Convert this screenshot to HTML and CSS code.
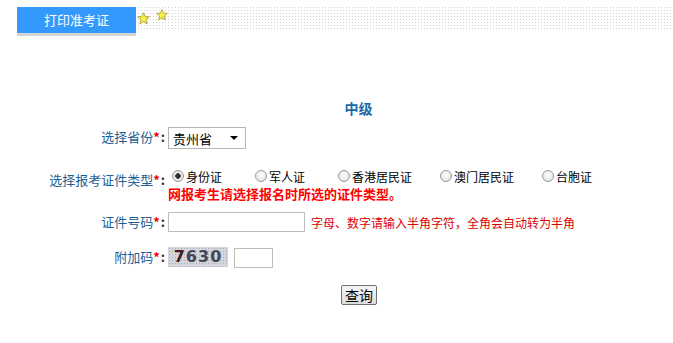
FILE: index.html
```html
<!DOCTYPE html>
<html lang="zh-CN">
<head>
    <meta charset="UTF-8">
    <title>打印准考证</title>
    <link rel="stylesheet" href="styles.css">
</head>
<body>
    <div class="header">
        <div class="tab">打印准考证</div>
        <div class="stars">
            <svg class="star star-low" viewBox="0 0 20 20" width="13" height="13">
                <polygon points="10,1 12.6,7 19,7.4 14,11.6 15.6,18.4 10,14.8 4.4,18.4 6,11.6 1,7.4 7.4,7" fill="#f7ee4a" stroke="#a9a23a" stroke-width="1.4" stroke-linejoin="round"/>
            </svg>
            <svg class="star star-high" viewBox="0 0 20 20" width="12" height="12">
                <polygon points="10,1 12.6,7 19,7.4 14,11.6 15.6,18.4 10,14.8 4.4,18.4 6,11.6 1,7.4 7.4,7" fill="#f7ee4a" stroke="#a9a23a" stroke-width="1.4" stroke-linejoin="round"/>
            </svg>
        </div>
        <div class="dots"></div>
    </div>

    <h2 class="level">中级</h2>

    <form class="query-form">
        <div class="row row-province">
            <label class="label">选择省份<span class="req">*</span><b>:</b></label>
            <div class="field">
                <div class="select-wrap">
                    <select class="select">
                        <option>贵州省</option>
                    </select>
                </div>
            </div>
        </div>

        <div class="row row-type">
            <label class="label">选择报考证件类型<span class="req">*</span><b>:</b></label>
            <div class="field">
                <div class="radios">
                    <label class="opt"><input type="radio" name="idtype" checked>身份证</label>
                    <label class="opt"><input type="radio" name="idtype">军人证</label>
                    <label class="opt opt-long"><input type="radio" name="idtype">香港居民证</label>
                    <label class="opt opt-long"><input type="radio" name="idtype">澳门居民证</label>
                    <label class="opt"><input type="radio" name="idtype">台胞证</label>
                </div>
                <div class="warn">网报考生请选择报名时所选的证件类型。</div>
            </div>
        </div>

        <div class="row row-id">
            <label class="label">证件号码<span class="req">*</span><b>:</b></label>
            <div class="field inline">
                <input type="text" class="text-id">
                <span class="hint">字母、数字请输入半角字符，全角会自动转为半角</span>
            </div>
        </div>

        <div class="row row-code">
            <label class="label">附加码<span class="req">*</span><b>:</b></label>
            <div class="field inline">
                <span class="captcha"><span class="c1">7</span>630</span>
                <input type="text" class="text-code">
            </div>
        </div>

        <div class="submit-row">
            <button type="button" class="btn">查询</button>
        </div>
    </form>
</body>
</html>
```

FILE: styles.css
```css
body {
    margin: 0;
    font-family: "Noto Sans CJK SC", "Liberation Sans", sans-serif;
    font-size: 12px;
    background: #fff;
    color: #000;
}
.header {
    display: flex;
    align-items: flex-start;
    margin: 5px 0 0 17px;
    height: 31px;
}
.tab {
    width: 119px;
    height: 26px;
    margin-top: 2px;
    line-height: 25px;
    background: #3399fd;
    color: #fff;
    font-size: 13px;
    text-align: center;
    border-bottom: 3px solid #d4d4d4;
}
.stars {
    display: flex;
    align-items: flex-start;
    width: 34px;
    height: 25px;
    background-image: linear-gradient(90deg, #fff 2px, transparent 2px), linear-gradient(#fff 2px, #d2d2d2 2px);
    background-size: 3px 3px;
}
.star {
    display: block;
}
.star-low {
    margin: 7px 0 0 1px;
}
.star-high {
    margin: 4px 0 0 6px;
}
.dots {
    flex: 1;
    height: 25px;
    background-image: linear-gradient(90deg, #fff 2px, transparent 2px), linear-gradient(#fff 2px, #d2d2d2 2px);
    background-size: 3px 3px;
}
.level {
    margin: 62px 0 0 0;
    height: 20px;
    line-height: 20px;
    text-align: center;
    font-size: 14px;
    font-weight: bold;
    color: #1a6aa8;
    padding-left: 44px;
}
.query-form {
    margin: 0;
}
.row {
    display: grid;
    grid-template-columns: 165px 1fr;
    column-gap: 3px;
}
.label {
    text-align: right;
    color: #1e5f94;
    font-size: 13px;
    line-height: 20px;
}
.label b {
    color: #333;
    padding-left: 1px;
}
.req {
    color: #e00;
    font-weight: bold;
}
.field.inline {
    display: flex;
    align-items: center;
}
.row-province {
    margin-top: 9px;
    align-items: center;
}
.row-province .label {
    margin-top: -3px;
}
.select-wrap {
    position: relative;
    width: 78px;
    height: 22px;
}
.select-wrap::after {
    content: "";
    position: absolute;
    right: 8px;
    top: 9px;
    border-left: 4px solid transparent;
    border-right: 4px solid transparent;
    border-top: 4px solid #000;
    pointer-events: none;
}
.select {
    appearance: none;
    -webkit-appearance: none;
    width: 78px;
    height: 22px;
    margin: 0;
    padding: 0 0 0 4px;
    border: 1px solid #b5b5b5;
    border-radius: 0;
    background: #fff;
    font-family: inherit;
    font-size: 13px;
    color: #000;
}
.row-type {
    margin-top: 19px;
}
.row-type .label {
    padding-top: 2px;
}
.radios {
    display: flex;
    align-items: center;
    height: 16px;
    padding-left: 4px;
}
.opt {
    display: flex;
    align-items: center;
    margin-right: 33px;
    color: #000;
}
.opt-long {
    margin-right: 28px;
}
.opt input {
    appearance: none;
    -webkit-appearance: none;
    width: 12px;
    height: 12px;
    margin: 0 2px 0 0;
    border: 1px solid #9a9a9a;
    border-radius: 50%;
    background: radial-gradient(circle at 50% 40%, #fff 0, #e6e6e6 70%);
}
.opt input:checked {
    background: radial-gradient(circle, #333 0, #333 2.5px, #f2f2f2 3px, #d8d8d8 100%);
}
.warn {
    margin-top: 1px;
    height: 18px;
    line-height: 18px;
    color: #f00;
    font-size: 13px;
    font-weight: bold;
}
.row-id {
    margin-top: 9px;
    align-items: center;
}
.text-id {
    width: 137px;
    height: 20px;
    box-sizing: border-box;
    margin: 0;
    border: 1px solid #bdbdbd;
}
.hint {
    margin-left: 6px;
    color: #d00;
}
.row-code {
    margin-top: 14px;
    align-items: center;
}
.captcha {
    display: inline-block;
    width: 60px;
    height: 20px;
    line-height: 20px;
    text-align: center;
    font-family: "DejaVu Sans", sans-serif;
    font-size: 16px;
    font-weight: bold;
    letter-spacing: 1px;
    color: #44455a;
    background-color: #d3d6dc;
    background-image: radial-gradient(#a9acb4 0.8px, transparent 1px);
    background-size: 3px 3px;
}
.c1 {
    color: #4a1822;
}
.text-code {
    width: 39px;
    height: 20px;
    box-sizing: border-box;
    margin: 2px 0 0 6px;
    border: 1px solid #bdbdbd;
}
.submit-row {
    margin-top: 17px;
    padding-left: 341px;
}
.btn {
    width: 36px;
    height: 20px;
    padding: 0;
    border: 1px solid #707070;
    border-radius: 2px;
    background: linear-gradient(#f6f6f6, #dcdcdc);
    font-family: inherit;
    font-size: 14px;
    line-height: 16px;
    color: #000;
}
```
